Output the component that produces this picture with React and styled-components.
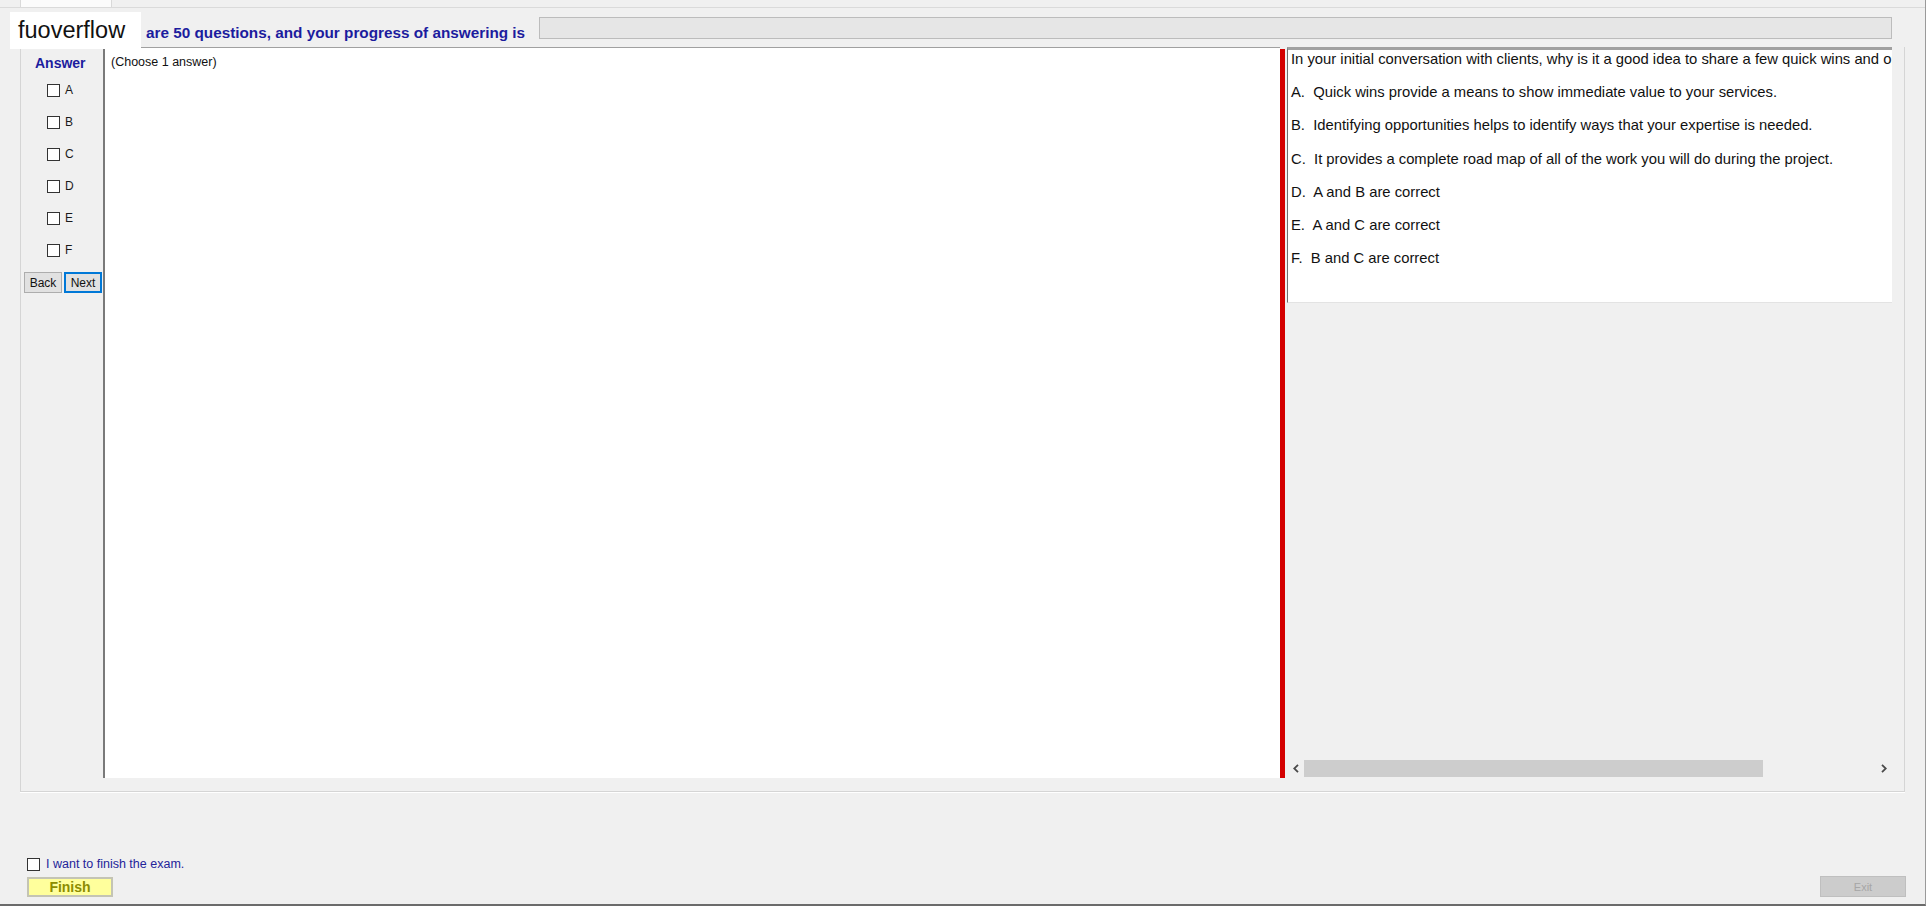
import React from "react";
import styled, { createGlobalStyle } from "styled-components";

const GlobalStyle = createGlobalStyle`
  html, body {
    margin: 0;
    padding: 0;
    background: #f0f0f0;
    font-family: "Liberation Sans", Arial, sans-serif;
  }
`;

const OPTIONS = ["A", "B", "C", "D", "E", "F"];

const CHOICES = [
  "In your initial conversation with clients, why is it a good idea to share a few quick wins and opportunities with them?",
  "A.  Quick wins provide a means to show immediate value to your services.",
  "B.  Identifying opportunities helps to identify ways that your expertise is needed.",
  "C.  It provides a complete road map of all of the work you will do during the project.",
  "D.  A and B are correct",
  "E.  A and C are correct",
  "F.  B and C are correct",
];

const Chevron = ({ dir }) => (
  <svg width="6" height="9" viewBox="0 0 6 9">
    <path
      d={dir === "left" ? "M5 0.8 L1.2 4.5 L5 8.2" : "M1 0.8 L4.8 4.5 L1 8.2"}
      fill="none"
      stroke="#4a4a4a"
      strokeWidth="1.8"
    />
  </svg>
);

const App = () => {
  return (
    <>
      <GlobalStyle />
      <Window>
        <TabStrip>
          <Tab />
        </TabStrip>

        <Header>
          <Title>are 50 questions, and your progress of answering is</Title>
          <Progress />
        </Header>
        <Watermark>fuoverflow</Watermark>

        <Group>
          <AnswerPanel>
            <AnswerTitle>Answer</AnswerTitle>
            {OPTIONS.map((o) => (
              <OptionRow key={o}>
                <Box />
                <OptionLabel>{o}</OptionLabel>
              </OptionRow>
            ))}
            <NavRow>
              <NavButton>Back</NavButton>
              <NavButton focused>Next</NavButton>
            </NavRow>
          </AnswerPanel>

          <QuestionPanel>(Choose 1 answer)</QuestionPanel>

          <Splitter />

          <RightPanel>
            <Sheet>
              {CHOICES.map((c) => (
                <Line key={c}>{c}</Line>
              ))}
            </Sheet>
            <HScroll>
              <Arrow>
                <Chevron dir="left" />
              </Arrow>
              <Track>
                <Thumb width={459} />
              </Track>
              <Arrow>
                <Chevron dir="right" />
              </Arrow>
            </HScroll>
          </RightPanel>
        </Group>

        <Bottom>
          <FinishGroup>
            <ConfirmRow>
              <Box />
              <ConfirmText>I want to finish the exam.</ConfirmText>
            </ConfirmRow>
            <FinishButton>Finish</FinishButton>
          </FinishGroup>
          <ExitButton disabled>Exit</ExitButton>
        </Bottom>
      </Window>
    </>
  );
};

const Window = styled.div`
  position: relative;
  width: 1926px;
  height: 906px;
  box-sizing: border-box;
  display: flex;
  flex-direction: column;
  background: #f0f0f0;
  border-right: 1px solid #9a9a9a;
  border-bottom: 2px solid #6b6b6b;
  overflow: hidden;
`;

const TabStrip = styled.div`
  height: 7px;
  padding-left: 20px;
  border-bottom: 1px solid #dadada;
  display: flex;
`;

const Tab = styled.div`
  width: 90px;
  height: 7px;
  background: #fbfbfb;
  border-left: 1px solid #d9d9d9;
  border-right: 1px solid #d9d9d9;
`;

const Header = styled.div`
  height: 39px;
  display: flex;
  align-items: flex-start;
  padding: 0 33px 0 146px;
`;

const Title = styled.div`
  margin-top: 16px;
  font-size: 15.3px;
  line-height: 17px;
  font-weight: bold;
  color: #1c1c9e;
  white-space: nowrap;
`;

const Progress = styled.div`
  flex: 1;
  margin: 9px 0 0 14px;
  height: 22px;
  box-sizing: border-box;
  background: #e6e6e6;
  border: 1px solid #bcbcbc;
`;

const Watermark = styled.div`
  position: absolute;
  left: 10px;
  top: 12px;
  width: 131px;
  height: 37px;
  box-sizing: border-box;
  padding-left: 8px;
  background: #ffffff;
  color: #111111;
  font-size: 23.5px;
  line-height: 37px;
`;

const Group = styled.div`
  display: flex;
  height: 745px;
  box-sizing: border-box;
  margin: 0 20px 0 20px;
  padding-bottom: 13px;
  border-left: 1px solid #d5d5d5;
  border-right: 1px solid #d5d5d5;
  border-bottom: 1px solid #d5d5d5;
  box-shadow: 0 1px 0 #ffffff;
`;

const AnswerPanel = styled.div`
  width: 82px;
  display: flex;
  flex-direction: column;
  padding-top: 8px;
`;

const AnswerTitle = styled.div`
  padding-left: 14px;
  margin-bottom: 3px;
  font-size: 14px;
  line-height: 16px;
  font-weight: bold;
  color: #1c1c9e;
`;

const OptionRow = styled.div`
  height: 32px;
  display: flex;
  align-items: center;
  padding-left: 26px;
  gap: 5px;
`;

const Box = styled.span`
  width: 13px;
  height: 13px;
  box-sizing: border-box;
  background: #ffffff;
  border: 1px solid #333333;
  flex: none;
`;

const OptionLabel = styled.span`
  font-size: 12px;
  color: #1a1a1a;
`;

const NavRow = styled.div`
  display: flex;
  gap: 2px;
  margin-top: 6px;
  padding-left: 3px;
`;

const NavButton = styled.button`
  width: 38px;
  height: 21px;
  padding: 0;
  box-sizing: border-box;
  font-family: "Liberation Sans", Arial, sans-serif;
  font-size: 12px;
  color: #111111;
  background: #e1e1e1;
  border: ${(p) => (p.focused ? "2px solid #0078d7" : "1px solid #adadad")};
`;

const QuestionPanel = styled.div`
  width: 1177px;
  box-sizing: border-box;
  background: #ffffff;
  border-top: 1px solid #a0a0a0;
  border-left: 2px solid #7a7a7a;
  padding: 7px 0 0 6px;
  font-size: 12.5px;
  line-height: 15px;
  color: #111111;
`;

const Splitter = styled.div`
  width: 5px;
  margin-top: 2px;
  background: #d40000;
`;

const RightPanel = styled.div`
  width: 608px;
  display: flex;
  flex-direction: column;
`;

const Sheet = styled.div`
  height: 256px;
  box-sizing: border-box;
  margin: 0 1px 0 2px;
  padding: 1px 0 0 3px;
  background: #ffffff;
  border-top: 3px solid #a0a0a0;
  border-left: 1px solid #6e6e6e;
  border-bottom: 1px solid #e3e3e3;
  overflow: hidden;
`;

const Line = styled.p`
  margin: 0 0 16.2px 0;
  font-size: 14.8px;
  line-height: 17px;
  color: #111111;
  white-space: pre;
`;

const HScroll = styled.div`
  margin: auto 1px 1px 2px;
  height: 17px;
  display: flex;
  background: #f0f0f0;
`;

const Arrow = styled.div`
  width: 17px;
  display: flex;
  align-items: center;
  justify-content: center;
`;

const Track = styled.div`
  flex: 1;
  display: flex;
`;

const Thumb = styled.div`
  width: ${(p) => p.width}px;
  background: #cdcdcd;
`;

const Bottom = styled.div`
  flex: 1;
  display: flex;
  justify-content: space-between;
  align-items: flex-end;
  padding: 0 19px 7px 27px;
`;

const FinishGroup = styled.div`
  display: flex;
  flex-direction: column;
  gap: 6px;
`;

const ConfirmRow = styled.div`
  display: flex;
  align-items: center;
  gap: 6px;
  height: 14px;
`;

const ConfirmText = styled.span`
  font-size: 12.5px;
  color: #24249a;
`;

const FinishButton = styled.button`
  width: 86px;
  height: 20px;
  padding: 0;
  box-sizing: border-box;
  background: #ffff9c;
  border: 2px solid #c4c4b4;
  font-family: "Liberation Sans", Arial, sans-serif;
  font-size: 14px;
  font-weight: bold;
  color: #8c8c00;
`;

const ExitButton = styled.button`
  width: 86px;
  height: 21px;
  padding: 0;
  box-sizing: border-box;
  background: #cccccc;
  border: 1px solid #bfbfbf;
  font-family: "Liberation Sans", Arial, sans-serif;
  font-size: 11px;
  color: #a6a6a6;
`;

export default App;
